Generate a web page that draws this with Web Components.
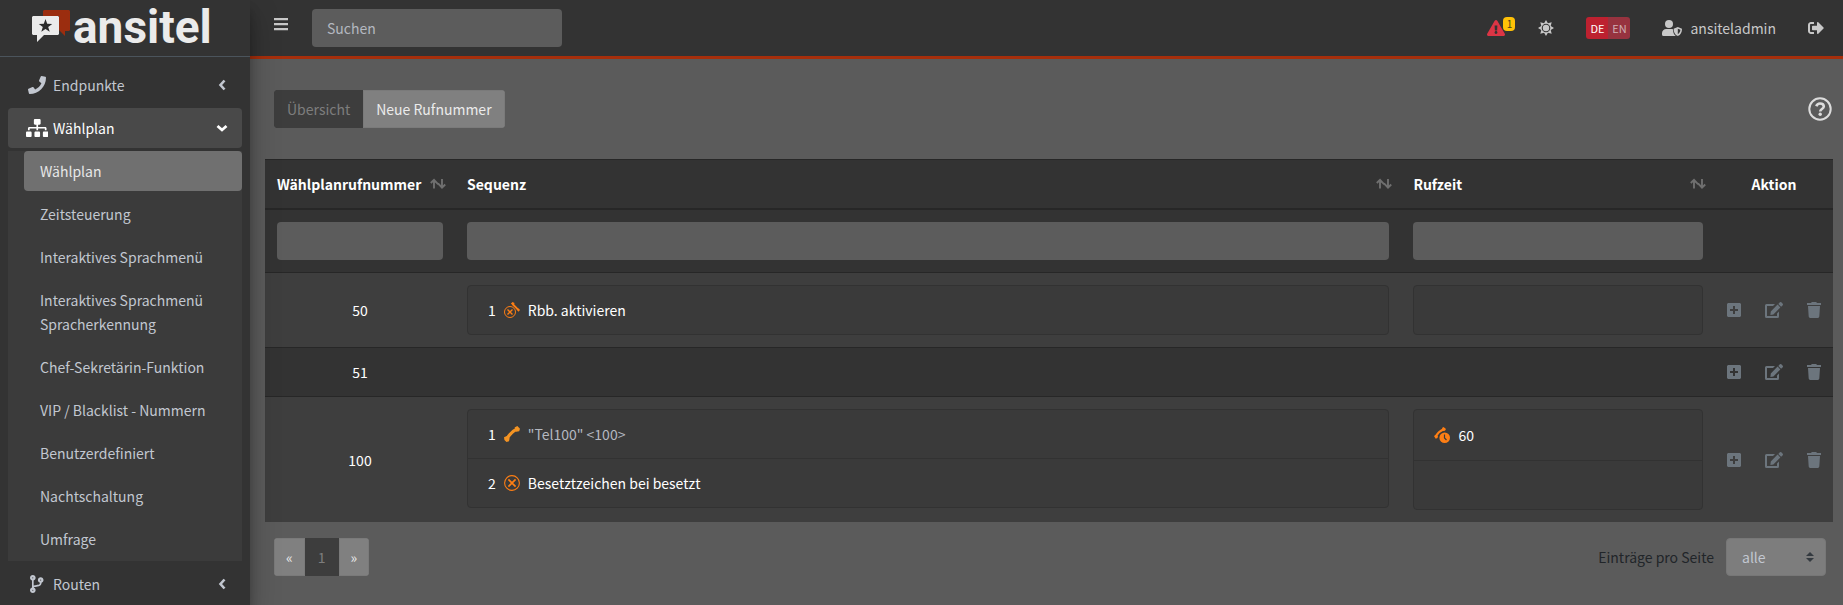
<!DOCTYPE html>
<html lang="de">
<head>
<meta charset="utf-8">
<title>ansitel</title>
<style>
  body {
    margin: 0;
    background: #5b5b5b;
    color: #fff;
    font: 14px/24px "Noto Sans CJK SC", sans-serif;
  }
</style>
</head>
<body>
<app-shell>
  <side-bar slot="side"></side-bar>
  <top-bar></top-bar>
  <main-tools></main-tools>
  <dial-plan></dial-plan>
  <table-footer></table-footer>
</app-shell>

<script>
const ICONS = {
  phone: [512, 512, '<path d="M493.4 24.6l-104-24c-11.3-2.6-22.9 3.3-27.5 13.9l-48 112c-4.2 9.8-1.4 21.3 6.9 28l60.6 49.6c-36 76.7-98.9 140.5-177.2 177.2l-49.6-60.6c-6.8-8.3-18.2-11.1-28-6.9l-112 48C3.9 366.5-2 378.1.6 389.4l24 104C27.1 504.2 36.7 512 48 512c256.1 0 464-207.5 464-464 0-11.2-7.7-20.9-18.6-23.4z"/>'],
  sitemap: [640, 512, '<path d="M128 352H32c-17.67 0-32 14.33-32 32v96c0 17.67 14.33 32 32 32h96c17.67 0 32-14.33 32-32v-96c0-17.67-14.33-32-32-32zm-24-80h192v48h48v-48h192v48h48v-57.59c0-21.17-17.23-38.41-38.41-38.41H344v-64h40c17.67 0 32-14.33 32-32V32c0-17.67-14.33-32-32-32H256c-17.67 0-32 14.33-32 32v96c0 17.67 14.33 32 32 32h40v64H94.41C73.23 224 56 241.23 56 262.41V320h48v-48zm264 80h-96c-17.67 0-32 14.33-32 32v96c0 17.67 14.33 32 32 32h96c17.67 0 32-14.33 32-32v-96c0-17.67-14.33-32-32-32zm240 0h-96c-17.67 0-32 14.33-32 32v96c0 17.67 14.33 32 32 32h96c17.67 0 32-14.33 32-32v-96c0-17.67-14.33-32-32-32z"/>'],
  branch: [384, 512, '<path d="M384 144c0-44.2-35.8-80-80-80s-80 35.8-80 80c0 36.4 24.3 67.1 57.5 76.8-.6 16.1-4.2 28.5-11 36.9-15.4 19.2-49.3 22.4-85.2 25.7-28.2 2.6-57.4 5.4-81.3 16.9v-144c32.5-10.2 56-40.5 56-76.3 0-44.2-35.8-80-80-80S0 35.8 0 80c0 35.8 23.5 66.1 56 76.3v199.3C23.5 365.9 0 396.2 0 432c0 44.2 35.8 80 80 80s80-35.8 80-80c0-34-21.2-63.1-51.2-74.6 3.1-5.2 7.8-9.8 14.9-13.4 16.2-8.2 40.4-10.4 66.1-12.8 42.2-3.9 90-8.4 118.2-43.4 14-17.4 21.1-39.8 21.6-67.9 31.6-10.8 54.4-40.7 54.4-75.9zM80 64c8.8 0 16 7.2 16 16s-7.2 16-16 16-16-7.2-16-16 7.2-16 16-16zm0 384c-8.8 0-16-7.2-16-16s7.2-16 16-16 16 7.2 16 16-7.2 16-16 16zm224-320c8.8 0 16 7.2 16 16s-7.2 16-16 16-16-7.2-16-16 7.2-16 16-16z"/>'],
  left: [10, 16, '<path d="M7.5 3.5L3.5 8l4 4.500" fill="none" stroke="currentColor" stroke-width="2.600"/>'],
  down: [12, 16, '<path d="M1.500 6L6 10l4.500-4" fill="none" stroke="currentColor" stroke-width="2.800"/>'],
  bars: [14, 16, '<path d="M0 2h14v2.300H0zM0 7h14v2.300H0zM0 12h14v2.300H0z"/>'],
  alert: [576, 512, '<path d="M569.517 440.013C587.975 472.007 564.806 512 527.94 512H48.054c-36.937 0-59.999-40.055-41.577-71.987L246.423 23.985c18.467-32.009 64.72-31.951 83.154 0l239.94 416.028zM288 354c-25.405 0-46 20.595-46 46s20.595 46 46 46 46-20.595 46-46-20.595-46-46-46zm-43.673-165.346l7.418 136c.347 6.364 5.609 11.346 11.982 11.346h48.546c6.373 0 11.635-4.982 11.982-11.346l7.418-136c.375-6.874-5.098-12.654-11.982-12.654h-63.383c-6.884 0-12.356 5.78-11.981 12.654z"/>'],
  sun: [16, 16, '<path fill-rule="evenodd" d="M8 0l1.900 3.300 3.800-1-1 3.800L16 8l-3.300 1.900 1 3.800-3.800-1L8 16l-1.900-3.300-3.800 1 1-3.800L0 8l3.300-1.900-1-3.800 3.800 1zM8 3.700a4.300 4.300 0 1 0 0 8.600 4.300 4.300 0 0 0 0-8.600z"/><circle cx="8" cy="8" r="3.200"/>'],
  user: [20, 16, '<circle cx="7" cy="4" r="4"/><path d="M4.200 9h5.600l1.200.3c0 3 .8 5.200 2.800 6.700H1.500A1.500 1.500 0 0 1 0 14.500v-1.300A4.200 4.200 0 0 1 4.200 9z"/><path fill-rule="evenodd" d="M15.800 7l4.200 1.700c0 3.600-1.300 6.100-4.200 7.300-2.800-1.200-4.200-3.700-4.200-7.300zM15.800 8.700v5.500c1.700-1 2.500-2.400 2.600-4.400z"/>'],
  logout: [512, 512, '<path d="M497 273L329 441c-15 15-41 4.500-41-17v-96H152c-13.300 0-24-10.700-24-24v-96c0-13.300 10.700-24 24-24h136V88c0-21.400 25.900-32 41-17l168 168c9.300 9.400 9.300 24.600 0 34zM192 436v-40c0-6.600-5.400-12-12-12H96c-17.700 0-32-14.300-32-32V160c0-17.700 14.300-32 32-32h84c6.600 0 12-5.400 12-12V76c0-6.600-5.400-12-12-12H96c-53 0-96 43-96 96v192c0 53 43 96 96 96h84c6.600 0 12-5.400 12-12z"/>'],
  help: [24, 24, '<circle cx="12" cy="12" r="10.700" fill="none" stroke="currentColor" stroke-width="2"/><path d="M8.300 9.300C9 7.300 10.300 6.500 12 6.500c2.200 0 3.800 1.200 3.800 3 0 2.500-3.600 2.600-3.600 5" fill="none" stroke="currentColor" stroke-width="2.600"/><circle cx="12.200" cy="17.300" r="1.700"/>'],
  sort: [16, 12, '<path d="M4 10.500V2M.8 5L4 1.800l4 4.400M12 1v8.500M15.200 6.500L12 9.700 8 5.300" fill="none" stroke="currentColor" stroke-width="1.900"/>'],
  plus: [14, 16, '<path fill-rule="evenodd" d="M1 1h12l1 1v12l-1 1H1l-1-1V2zM6 4v3H3v2h3v3h2V9h3V7H8V4z"/>'],
  edit: [18, 16, '<path d="M10 2H1.500a1.500 1.500 0 0 0-1.500 1.500v11A1.500 1.500 0 0 0 1.500 16h11a1.500 1.500 0 0 0 1.500-1.500V9.500l-2 2V14H2V4h6z"/><path d="M12.600 2.600l2.800 2.800-7 7-3 .6.400-3.400zM13.300 1.900l1.300-1.400a1.400 1.400 0 0 1 2 0l.9.900a1.400 1.400 0 0 1 0 2l-1.400 1.300z"/>'],
  trash: [14, 16, '<path d="M0 1h4l.8-1h4.400l.8 1h4v2H0zM1 4h12l-.7 10.600A1.500 1.500 0 0 1 10.800 16H3.200a1.500 1.500 0 0 1-1.500-1.400z"/>'],
  handset: [16, 16, '<path d="M3 13Q6 6.500 13 3" fill="none" stroke="currentColor" stroke-width="3.200"/><path d="M10.600 1.600L13.300 0 16 2.700l-.8 2.500-3 .6zM0 11.300l2.800-1.400 2.800 2.600-.6 2.700L2.500 16 .4 14z"/>'],
  busy: [16, 16, '<circle cx="8" cy="8" r="7.400" fill="none" stroke="currentColor" stroke-width="1.100"/><path d="M4.400 4.400l7.200 7.200M11.600 4.400l-7.200 7.200" fill="none" stroke="currentColor" stroke-width="1.700"/>'],
  callback: [16, 16, '<circle cx="6" cy="10" r="5.500" fill="none" stroke="currentColor" stroke-width="1"/><path d="M3.500 7.500l5 5M8.500 7.500l-5 5" fill="none" stroke="currentColor" stroke-width="1.400"/><path d="M8.500 2L14.300 7.800" fill="none" stroke="currentColor" stroke-width="1.900"/><path d="M6.800 1.700L8.500 0l2 1-.7 2.400zM12.600 7.400l2.200-1L16 8l-1.500 1.700z"/>'],
  ringtime: [16, 16, '<path d="M1.500 9.500Q4.500 4.500 10 2" fill="none" stroke="currentColor" stroke-width="2"/><path d="M8 1l1.500-1L12 2l-1 1.700-2 .3zM0 9l2-1.300 2 1.300-.5 2-1.800.7z"/><circle cx="10.700" cy="10.700" r="6.300" fill="#3a3a3a"/><circle cx="10.700" cy="10.700" r="5.300"/><path d="M10.500 7.500V11l2 2" fill="none" stroke="#3a3a3a" stroke-width="1.200"/>'],
  updown: [8, 10, '<path d="M4 0l4 4H0zM0 6h8l-4 4z"/>']
};

// <ui-icon name="..."> takes its width from the viewBox and its height from the user
class UiIcon extends HTMLElement {
  connectedCallback() {
    const [w, h, body] = ICONS[this.getAttribute("name")];
    this.attachShadow({ mode: "open" }).innerHTML = `
      <style>
        :host { display: inline-flex; height: 16px; flex: none; }
        svg { height: 100%; width: auto; display: block; fill: currentColor; }
      </style>
      <svg viewBox="0 0 ${w} ${h}" aria-hidden="true">${body}</svg>`;
  }
}
customElements.define("ui-icon", UiIcon);

class AppShell extends HTMLElement {
  constructor() {
    super();
    this.attachShadow({ mode: "open" }).innerHTML = `
      <style>
        :host { display: grid; grid-template-columns: 250px minmax(0, 1fr); min-height: 100vh; }
        aside {
          z-index: 1;
          background: #333;
          box-shadow: 0 14px 28px rgba(0, 0, 0, .25), 0 10px 10px rgba(0, 0, 0, .22);
        }
      </style>
      <aside><slot name="side"></slot></aside>
      <main><slot></slot></main>`;
  }
}
customElements.define("app-shell", AppShell);

class BrandLogo extends HTMLElement {
  constructor() {
    super();
    this.attachShadow({ mode: "open" }).innerHTML = `
      <style>
        :host { display: block; height: 56px; border-bottom: 1px solid #4b545c; }
        a { display: flex; gap: 3px; height: 56px; padding-left: 32px; color: #ebebeb; text-decoration: none; }
        svg { margin-top: 10px; }
        span { font: 700 46px/54px Roboto, sans-serif; }
      </style>
      <a href="#">
        <svg width="38" height="32" viewBox="0 0 38 32">
          <path fill="#9b2d0f" d="M12 0h25l1 1v19l-1 1h-4v5l-6-6V6H11V1z"/>
          <path fill="#ebebeb" d="M1 6h25l1 1v17l-1 1H12l-7 7v-7H1l-1-1V7z"/>
          <path fill="#2b2b2b" d="M13.500 9l1.700 4.800 5 .1-4 3.100 1.500 4.800-4.200-2.900-4.200 2.900 1.500-4.800-4-3.100 5-.1z"/>
        </svg>
        <span>ansitel</span>
      </a>`;
  }
}
customElements.define("brand-logo", BrandLogo);

class NavLink extends HTMLElement {
  connectedCallback() {
    const icon = this.getAttribute("icon");
    const arrow = this.getAttribute("arrow");
    this.attachShadow({ mode: "open" }).innerHTML = `
      <style>
        :host { display: block; color: #c2c7d0; }
        a {
          display: flex;
          align-items: center;
          padding: 8px 16px;
          border-radius: 4px;
          color: inherit;
          text-decoration: none;
        }
        .icon { display: flex; justify-content: center; width: 26px; margin-right: 3px; }
        .icon ui-icon { height: 18px; }
        .text { flex: 1; }
        :host([icon]) a { padding-right: 14px; }
        :host([open]) a { background: #494949; color: #fff; }
        :host([active]) a { background: #707070; color: #e8e8e8; }
        .arrow { display: flex; justify-content: center; width: 12px; }
      </style>
      <a href="#">
        ${icon ? `<span class="icon"><ui-icon name="${icon}"></ui-icon></span>` : ""}
        <span class="text"><slot></slot></span>
        ${arrow ? `<span class="arrow"><ui-icon name="${arrow}"></ui-icon></span>` : ""}
      </a>`;
  }
}
customElements.define("nav-link", NavLink);

class SideBar extends HTMLElement {
  constructor() {
    super();
    this.attachShadow({ mode: "open" }).innerHTML = `
      <style>
        :host { display: block; }
        nav { display: grid; gap: 3px; padding: 8px 8px 0; }
        .tree { display: grid; gap: 3px; padding: 0 0 2px 16px; background: #3b3b3b; }
      </style>
      <brand-logo></brand-logo>
      <nav>
        <nav-link icon="phone" arrow="left">Endpunkte</nav-link>
        <nav-link icon="sitemap" arrow="down" open>Wählplan</nav-link>
        <div class="tree">
          <nav-link active>Wählplan</nav-link>
          <nav-link>Zeitsteuerung</nav-link>
          <nav-link>Interaktives Sprachmenü</nav-link>
          <nav-link>Interaktives Sprachmenü Spracherkennung</nav-link>
          <nav-link>Chef-Sekretärin-Funktion</nav-link>
          <nav-link>VIP / Blacklist - Nummern</nav-link>
          <nav-link>Benutzerdefiniert</nav-link>
          <nav-link>Nachtschaltung</nav-link>
          <nav-link>Umfrage</nav-link>
        </div>
        <nav-link icon="branch" arrow="left">Routen</nav-link>
      </nav>`;
  }
}
customElements.define("side-bar", SideBar);

class TopBar extends HTMLElement {
  constructor() {
    super();
    this.attachShadow({ mode: "open" }).innerHTML = `
      <style>
        :host {
          display: flex;
          align-items: center;
          height: 56px;
          padding: 0 19px 0 24px;
          background: #333;
          border-bottom: 3px solid #a62f0c;
          color: #c8c8c8;
        }
        button { padding: 0; border: 0; background: none; color: inherit; font: inherit; display: flex; }
        .menu { margin: 0 24px 8px 0; }
        input {
          box-sizing: border-box;
          width: 250px;
          height: 38px;
          padding: 0 15px;
          border: 0;
          border-radius: 4px;
          background: #5c5c5c;
          color: #fff;
          font: inherit;
        }
        input::placeholder { color: #b4b8c0; opacity: 1; }
        .right { display: flex; align-items: center; margin-left: auto; gap: 32px; }
        .alert { position: relative; color: #dc3545; margin-right: 1px; }
        .badge {
          position: absolute;
          left: 16px;
          top: -3px;
          width: 12px;
          height: 14px;
          border-radius: 4px;
          background: #ffc107;
          color: #4d4219;
          font-size: 10px;
          line-height: 14px;
          text-align: center;
        }
        .lang { display: flex; border-radius: 3px; overflow: hidden; }
        .lang button { width: 22px; justify-content: center; background: #97333f; color: #d0b0b4; font-size: 11px; line-height: 22px; }
        .lang .on { background: #bd2130; color: #fff; }
        a { display: flex; align-items: center; gap: 8px; color: inherit; text-decoration: none; }
      </style>
      <button class="menu" aria-label="Menü"><ui-icon name="bars"></ui-icon></button>
      <input type="search" placeholder="Suchen" aria-label="Suchen">
      <div class="right">
        <button class="alert" aria-label="Warnungen"><ui-icon name="alert"></ui-icon><span class="badge">1</span></button>
        <button aria-label="Design"><ui-icon name="sun"></ui-icon></button>
        <div class="lang"><button class="on">DE</button><button>EN</button></div>
        <a href="#"><ui-icon name="user"></ui-icon>ansiteladmin</a>
        <button aria-label="Abmelden"><ui-icon name="logout"></ui-icon></button>
      </div>`;
  }
}
customElements.define("top-bar", TopBar);

class MainTools extends HTMLElement {
  constructor() {
    super();
    this.attachShadow({ mode: "open" }).innerHTML = `
      <style>
        :host { display: flex; align-items: center; justify-content: space-between; padding: 31px 11px 31px 24px; }
        .group { display: flex; border-radius: 4px; overflow: hidden; }
        button { height: 38px; padding: 0 12px; border: 1px solid #7a7a7a; background: #808080; color: #ebebeb; font: inherit; }
        .on { background: #3d3d3d; border-color: #3d3d3d; color: #7d7d7d; }
        .help { display: flex; height: 24px; padding: 0; border: 0; background: none; color: #dcdcdc; }
        .help ui-icon { height: 24px; }
      </style>
      <div class="group"><button class="on">Übersicht</button><button>Neue Rufnummer</button></div>
      <button class="help" aria-label="Hilfe"><ui-icon name="help"></ui-icon></button>`;
  }
}
customElements.define("main-tools", MainTools);

class StepList extends HTMLElement {
  constructor() {
    super();
    this.attachShadow({ mode: "open" }).innerHTML = `
      <style>
        :host { display: block; border: 1px solid #323232; border-radius: 4px; background: #3a3a3a; overflow: hidden; }
        ::slotted(step-item:not(:first-child)) { border-top: 1px solid #323232; }
      </style>
      <slot></slot>`;
  }
}
customElements.define("step-list", StepList);

class StepItem extends HTMLElement {
  connectedCallback() {
    const icon = this.getAttribute("icon");
    const nr = this.getAttribute("nr");
    this.attachShadow({ mode: "open" }).innerHTML = `
      <style>
        :host { display: flex; align-items: center; gap: 8px; min-height: 24px; padding: 12px 20px; }
        :host([tall]) { padding: 13px 20px; }
        ui-icon { color: #fd7e14; }
        ui-icon[name=handset] { color: #f39323; }
        :host([muted]) .text { color: #b4b8c0; }
      </style>
      ${nr ? `<span>${nr}</span>` : ""}
      ${icon ? `<ui-icon name="${icon}"></ui-icon>` : ""}
      <span class="text"><slot></slot></span>`;
  }
}
customElements.define("step-item", StepItem);

class RowActions extends HTMLElement {
  constructor() {
    super();
    this.attachShadow({ mode: "open" }).innerHTML = `
      <style>
        :host { display: flex; align-items: center; gap: 24px; height: 24px; color: #6c757d; }
        button { display: flex; padding: 0; border: 0; background: none; color: inherit; }
      </style>
      <button aria-label="Hinzufügen"><ui-icon name="plus"></ui-icon></button>
      <button aria-label="Bearbeiten"><ui-icon name="edit"></ui-icon></button>
      <button aria-label="Löschen"><ui-icon name="trash"></ui-icon></button>`;
  }
}
customElements.define("row-actions", RowActions);

class DialPlan extends HTMLElement {
  constructor() {
    super();
    this.attachShadow({ mode: "open" }).innerHTML = `
      <style>
        :host { display: block; padding: 0 10px 0 15px; }
        table { width: 100%; table-layout: fixed; border-spacing: 0; background: #333; }
        .c1 { width: 190px; }
        .c3 { width: 20%; }
        .c4 { width: 118px; }
        th, td { padding: 12px; border-top: 1px solid #272727; text-align: left; }
        thead tr:first-child th { border-bottom: 2px solid #272727; }
        thead td { border-top: 0; }
        tbody tr:nth-child(odd) { background: #3e3e3e; }
        td.nr, th.act { text-align: center; }
        .top { vertical-align: top; }
        .head { display: flex; align-items: center; justify-content: space-between; margin-right: -3px; }
        .head ui-icon { height: 12px; color: #6f6f6f; }
        .head button { display: flex; padding: 0; border: 0; background: none; }
        input {
          display: block;
          box-sizing: border-box;
          width: 100%;
          height: 38px;
          padding: 0 12px;
          border: 0;
          border-radius: 4px;
          background: #5c5c5c;
          color: #fff;
          font: inherit;
        }
      </style>
      <table>
        <colgroup><col class="c1"><col><col class="c3"><col class="c4"></colgroup>
        <thead>
          <tr>
            <th><div class="head">Wählplanrufnummer<button aria-label="Sortieren"><ui-icon name="sort"></ui-icon></button></div></th>
            <th><div class="head">Sequenz<button aria-label="Sortieren"><ui-icon name="sort"></ui-icon></button></div></th>
            <th><div class="head">Rufzeit<button aria-label="Sortieren"><ui-icon name="sort"></ui-icon></button></div></th>
            <th class="act">Aktion</th>
          </tr>
          <tr>
            <td><input aria-label="Wählplanrufnummer"></td>
            <td><input aria-label="Sequenz"></td>
            <td><input aria-label="Rufzeit"></td>
            <td></td>
          </tr>
        </thead>
        <tbody>
          <tr>
            <td class="nr">50</td>
            <td class="top"><step-list><step-item nr="1" icon="callback">Rbb. aktivieren</step-item></step-list></td>
            <td class="top"><step-list><step-item></step-item></step-list></td>
            <td><row-actions></row-actions></td>
          </tr>
          <tr>
            <td class="nr">51</td>
            <td></td>
            <td></td>
            <td><row-actions></row-actions></td>
          </tr>
          <tr>
            <td class="nr">100</td>
            <td class="top">
              <step-list>
                <step-item nr="1" icon="handset" muted>"Tel100" &lt;100&gt;</step-item>
                <step-item nr="2" icon="busy">Besetztzeichen bei besetzt</step-item>
              </step-list>
            </td>
            <td class="top">
              <step-list>
                <step-item icon="ringtime" tall>60</step-item>
                <step-item></step-item>
              </step-list>
            </td>
            <td><row-actions></row-actions></td>
          </tr>
        </tbody>
      </table>`;
  }
}
customElements.define("dial-plan", DialPlan);

class TableFooter extends HTMLElement {
  constructor() {
    super();
    this.attachShadow({ mode: "open" }).innerHTML = `
      <style>
        :host { display: flex; justify-content: space-between; padding: 16px 17px 28px 24px; }
        .pages { display: flex; border-radius: 4px; overflow: hidden; }
        .pages button { height: 38px; padding: 0 11px; border: 1px solid #7a7a7a; background: #808080; color: #ebebeb; font: inherit; }
        .pages .on { padding: 0 12px; background: #3d3d3d; border-color: #3d3d3d; color: #7d7d7d; }
        .size { display: flex; align-items: center; gap: 12px; color: #212529; }
        .select { position: relative; display: flex; }
        select {
          appearance: none;
          width: 100px;
          height: 38px;
          padding: 0 15px;
          border: 1px solid #777;
          border-radius: 4px;
          background: #7d7d7d;
          color: #c2c7d0;
          font: inherit;
        }
        .select ui-icon { position: absolute; right: 12px; top: 14px; height: 10px; color: #343a40; pointer-events: none; }
      </style>
      <div class="pages"><button>«</button><button class="on">1</button><button>»</button></div>
      <div class="size">
        <label for="size">Einträge pro Seite</label>
        <div class="select">
          <select id="size"><option>alle</option></select>
          <ui-icon name="updown"></ui-icon>
        </div>
      </div>`;
  }
}
customElements.define("table-footer", TableFooter);
</script>
</body>
</html>
